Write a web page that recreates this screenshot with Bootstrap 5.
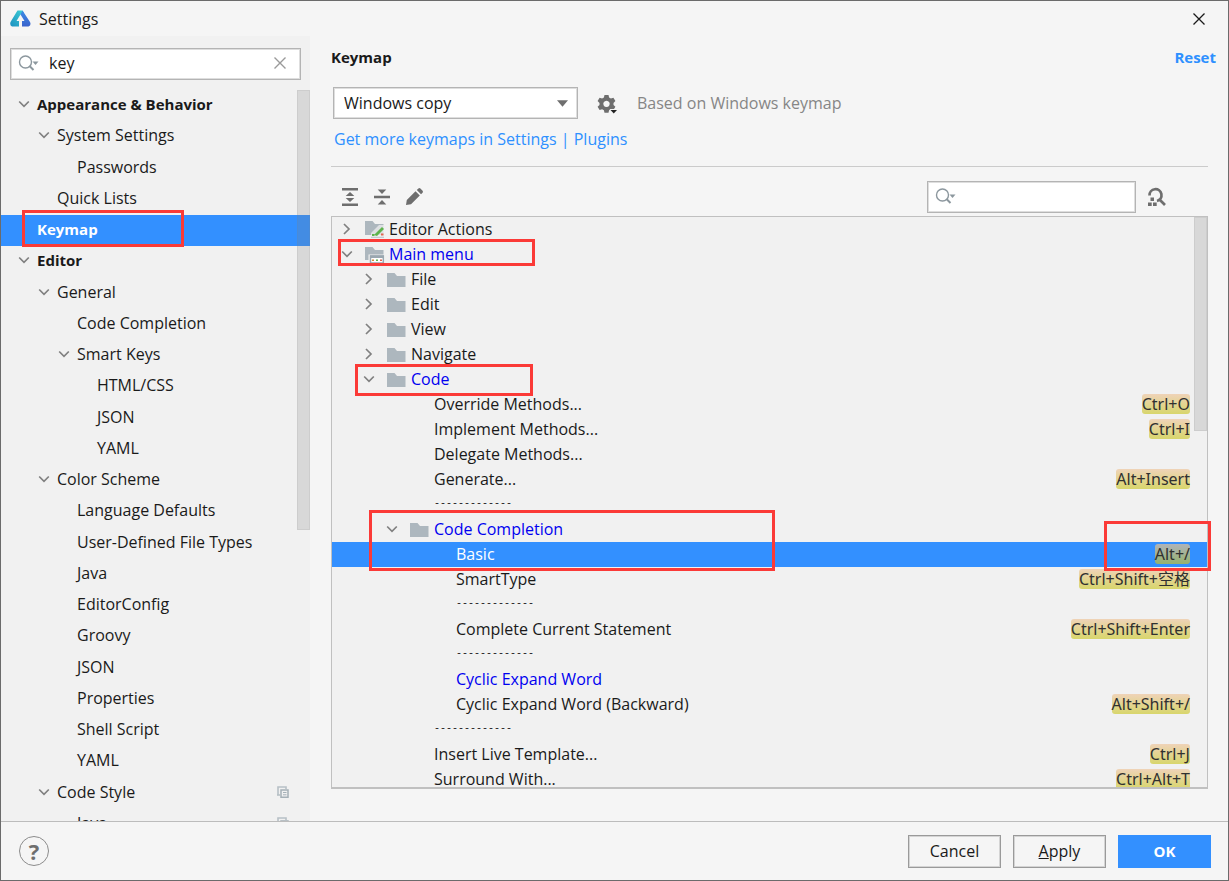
<!DOCTYPE html>
<html lang="en">
<head>
<meta charset="utf-8">
<meta name="viewport" content="width=device-width, initial-scale=1">
<title>Settings</title>
<link href="https://cdn.jsdelivr.net/npm/bootstrap@5.3.0/dist/css/bootstrap.min.css" rel="stylesheet">
<style>
  body { font-family: "Open Sans", "Noto Sans CJK SC", sans-serif; font-size: 16px; line-height: 24px; color: #1a1a1a; background: #f5f5f5; }
  .window { border: 1px solid #6b6b6b; }
  .title-bar { height: 35px; padding: 0 21px 0 9px; }
  .title-bar h1 { font-size: 16px; line-height: 24px; }
  .strong { font-size: 15px; font-weight: 700; line-height: 24px; }
  .plain-btn { border: 0; background: none; padding: 0; display: flex; color: inherit; }
  .min-h-0 { min-height: 0; }
  a { color: #2e90ff; text-decoration: none; }

  .search { height: 32px; border: 1px solid #b4b4b4; box-shadow: inset 0 0 0 1px #dedede; background: #fff; padding: 0 13px 2px 7px; }
  .search input { border: 0; outline: 0; background: none; min-width: 0; color: inherit; padding: 0; margin-left: 9px; }

  .sidebar { width: 309px; background: #f1f1f1; padding-top: 12px; }
  .sidebar .search { margin: 0 9px 10px; }
  .tree { list-style: none; margin: 0; padding: 0; }
  .nav-row { height: 31px; padding-right: 21px; padding-bottom: 4px; white-space: nowrap; }
  .nav-row:nth-child(4n+2) { height: 32px; }
  .slot { width: 23px; padding-left: 4px; display: flex; flex: none; }
  .in0 { padding-left: 13px; } .in1 { padding-left: 33px; } .in2 { padding-left: 53px; } .in3 { padding-left: 73px; }
  .chosen { background: #3390ff; color: #fff; }
  .thumb { position: absolute; top: 0; right: 0; width: 13px; background: rgba(128,128,128,.22); border: 1px solid rgba(128,128,128,.12); }
  .sidebar .thumb { height: 440px; }

  .pane { padding: 9px 20px 32px 21px; }
  .reset { margin-right: -8px; }
  .scheme-line { margin-top: 18px; }
  .scheme { width: 245px; height: 32px; border: 1px solid #b4b4b4; box-shadow: inset 0 0 0 1px #dedede; border-radius: 0; padding: 0 30px 0 10px; font-size: 16px; line-height: 24px; color: #1a1a1a; background-color: #fff; margin-left: 2px;
    background-image: url("data:image/svg+xml,%3Csvg xmlns='http://www.w3.org/2000/svg' viewBox='0 0 12 7'%3E%3Cpath fill='%236e6e6e' d='M0 0h12L6 7z'/%3E%3C/svg%3E"); background-size: 11px 7px; background-position: right 9px center; }
  .muted { color: #868686; margin-left: 19px; }
  .more { margin: 8px 0 15px 3px; }
  .rule { border-top: 1px solid #cbcbcb; }
  .toolbar { padding: 0 41px 0 9px; margin: 14px 0 3px; }
  .toolbar .search { width: 209px; }
  .by-key { margin-left: 9px; }

  .keymap { border: 1px solid #c0c0c0; border-bottom-width: 2px; background: #f1f1f1; }
  .key-row { height: 25px; padding-right: 17px; padding-bottom: 1px; white-space: nowrap; }
  .key-row .arrow { width: 26px; padding-left: 2px; display: flex; flex: none; }
  .key-row .icon { width: 24px; display: flex; flex: none; }
  .at0 { padding-left: 7px; } .at1 { padding-left: 29px; } .at2 { padding-left: 52px; }
  .leaf2 { padding-left: 102px; } .leaf3 { padding-left: 124px; }
  .dashes { font-family: "Liberation Mono", monospace; font-size: 10px; }
  .changed { color: #0000f0; }
  .keys { margin-left: auto; font-family: "Noto Sans", "Noto Sans CJK SC", sans-serif; color: #303030; line-height: 20px; height: 20px; border-radius: 3px; background: linear-gradient(#efd3b8, #d8d66c); }
  .chosen .keys { background: linear-gradient(#b0b3b8, #96b26e); }
  .keymap .thumb { height: 214px; }

  .callout-box { position: absolute; border: 3px solid #fb3a37; pointer-events: none; z-index: 2; }
  .mark-nav { left: 21px; top: -5px; width: 162px; height: 37px; }
  .mark-menu { left: 6px; top: -3px; width: 197px; height: 27px; }
  .mark-code { left: 23px; top: -3px; width: 178px; height: 32px; }
  .mark-completion { left: 37px; top: -7px; width: 406px; height: 61px; }
  .mark-keys { right: -4px; top: 304px; width: 107px; height: 50px; }

  .bottom-bar { border-top: 1px solid #bcbcbc; height: 59px; padding: 0 17px; }
  .help { width: 30px; height: 30px; border: 1px solid #8c8c8c; border-radius: 50%; background: none; color: #6e6e6e; font-size: 22px; font-weight: 700; line-height: 28px; padding: 0; margin-left: 1px; }
  .dlg-group { gap: 12px; }
  .dlg { width: 93px; height: 33px; border: 1px solid #9a9a9a; box-shadow: inset 0 0 0 1px #d4d4d4; padding: 0; line-height: 24px; color: #1a1a1a; background: #f5f5f5; }
  .dlg-ok { background: #3390ff; border-color: #3390ff; box-shadow: none; color: #fff; }
</style>
</head>
<body>
<svg class="d-none">
  <symbol id="down" viewBox="0 0 12 12"><path d="M1.200 3.500 6 8.300l4.800-4.800" fill="none" stroke="#808080" stroke-width="1.700"/></symbol>
  <symbol id="right" viewBox="0 0 12 12"><path d="M3 1 8 6l-5 5" fill="none" stroke="#808080" stroke-width="1.700"/></symbol>
  <symbol id="folder" viewBox="0 0 19 15"><path d="M0 1h7.500l2.500 3h8.500v11H0z" fill="#adb7be"/></symbol>
  <symbol id="find" viewBox="0 0 22 18"><circle cx="7.500" cy="8" r="6" fill="none" stroke="#8c979e" stroke-width="1.400"/><path d="m11.500 12 4 4" stroke="#8c979e" stroke-width="2"/><path d="M14.500 7.500h6l-3 3.500z" fill="#8c979e"/></symbol>
  <symbol id="copy" viewBox="0 0 12 12"><path d="M1 9V1h8v2" fill="none" stroke="#b7c0c6" stroke-width="1.600"/><path d="M0 9h3" stroke="#b7c0c6" stroke-width="1.600"/><path d="M4 4h7v7.200H4z" fill="#f1f1f1" stroke="#a5b0b7" stroke-width="1.500"/><path d="M6 6.500h3.500M6 8.800h3.500" stroke="#a5b0b7"/></symbol>
</svg>

<div class="window vh-100 d-flex flex-column overflow-hidden">
  <header class="title-bar d-flex align-items-center flex-shrink-0">
    <svg width="21" height="17" viewBox="0 0 21 17" aria-hidden="true">
      <defs>
        <linearGradient id="lgA" x1="0" y1="1" x2="1" y2="0"><stop offset="0" stop-color="#1c8fc0"/><stop offset="1" stop-color="#3ed0d6"/></linearGradient>
        <linearGradient id="lgB" x1="0" y1="0" x2="0" y2="1"><stop offset="0" stop-color="#3a8be6"/><stop offset="1" stop-color="#3a62cc"/></linearGradient>
      </defs>
      <path d="M7.500.5h5L14 3l-3.500 1.500L6.500 11H9v5.500H2Q-.5 15.500.5 12z" fill="url(#lgA)"/>
      <path d="M12.500.5 20 12q1.500 3.500-1.500 4.500H12V11h2.500l-4-6.500z" fill="url(#lgB)"/>
    </svg>
    <h1 class="m-0 ms-2 fw-normal">Settings</h1>
    <button class="plain-btn ms-auto" type="button" aria-label="Close"><svg width="16" height="16" viewBox="0 0 16 16"><path d="m2.500 2.500 11 11M13.500 2.500l-11 11" stroke="#1a1a1a" stroke-width="1.300"/></svg></button>
  </header>

  <div class="d-flex flex-grow-1 min-h-0">
    <aside class="sidebar d-flex flex-column flex-shrink-0">
      <div class="search d-flex align-items-center flex-shrink-0">
        <svg width="22" height="18" aria-hidden="true"><use href="#find"/></svg>
        <input class="flex-grow-1" type="text" value="key" aria-label="Search settings">
        <button class="plain-btn" type="button" aria-label="Clear"><svg width="14" height="14" viewBox="0 0 14 14"><path d="m1.500 1.500 11 11M12.500 1.500l-11 11" stroke="#9a9a9a" stroke-width="1.400"/></svg></button>
      </div>
      <div class="position-relative flex-grow-1 min-h-0 overflow-hidden">
        <ul class="tree">
          <li class="nav-row in0 d-flex align-items-center strong"><span class="slot"><svg width="12" height="12"><use href="#down"/></svg></span>Appearance &amp; Behavior</li>
          <li class="nav-row in1 d-flex align-items-center"><span class="slot"><svg width="12" height="12"><use href="#down"/></svg></span>System Settings</li>
          <li class="nav-row in2 d-flex align-items-center"><span class="slot"></span>Passwords</li>
          <li class="nav-row in1 d-flex align-items-center"><span class="slot"></span>Quick Lists</li>
          <li class="nav-row in0 d-flex align-items-center strong chosen position-relative"><span class="slot"></span>Keymap<span class="callout-box mark-nav"></span></li>
          <li class="nav-row in0 d-flex align-items-center strong"><span class="slot"><svg width="12" height="12"><use href="#down"/></svg></span>Editor</li>
          <li class="nav-row in1 d-flex align-items-center"><span class="slot"><svg width="12" height="12"><use href="#down"/></svg></span>General</li>
          <li class="nav-row in2 d-flex align-items-center"><span class="slot"></span>Code Completion</li>
          <li class="nav-row in2 d-flex align-items-center"><span class="slot"><svg width="12" height="12"><use href="#down"/></svg></span>Smart Keys</li>
          <li class="nav-row in3 d-flex align-items-center"><span class="slot"></span>HTML/CSS</li>
          <li class="nav-row in3 d-flex align-items-center"><span class="slot"></span>JSON</li>
          <li class="nav-row in3 d-flex align-items-center"><span class="slot"></span>YAML</li>
          <li class="nav-row in1 d-flex align-items-center"><span class="slot"><svg width="12" height="12"><use href="#down"/></svg></span>Color Scheme</li>
          <li class="nav-row in2 d-flex align-items-center"><span class="slot"></span>Language Defaults</li>
          <li class="nav-row in2 d-flex align-items-center"><span class="slot"></span>User-Defined File Types</li>
          <li class="nav-row in2 d-flex align-items-center"><span class="slot"></span>Java</li>
          <li class="nav-row in2 d-flex align-items-center"><span class="slot"></span>EditorConfig</li>
          <li class="nav-row in2 d-flex align-items-center"><span class="slot"></span>Groovy</li>
          <li class="nav-row in2 d-flex align-items-center"><span class="slot"></span>JSON</li>
          <li class="nav-row in2 d-flex align-items-center"><span class="slot"></span>Properties</li>
          <li class="nav-row in2 d-flex align-items-center"><span class="slot"></span>Shell Script</li>
          <li class="nav-row in2 d-flex align-items-center"><span class="slot"></span>YAML</li>
          <li class="nav-row in1 d-flex align-items-center"><span class="slot"><svg width="12" height="12"><use href="#down"/></svg></span>Code Style<svg class="ms-auto" width="12" height="12"><use href="#copy"/></svg></li>
          <li class="nav-row in2 d-flex align-items-center"><span class="slot"></span>Java<svg class="ms-auto" width="12" height="12"><use href="#copy"/></svg></li>
        </ul>
        <div class="thumb"></div>
      </div>
    </aside>

    <main class="pane d-flex flex-column flex-grow-1 min-h-0">
      <div class="d-flex justify-content-between">
        <h2 class="m-0 strong">Keymap</h2>
        <a class="strong reset" href="#">Reset</a>
      </div>
      <div class="scheme-line d-flex align-items-center">
        <select class="scheme form-select flex-shrink-0" aria-label="Keymap scheme"><option>Windows copy</option></select>
        <button class="plain-btn ms-3" type="button" aria-label="Keymap actions"><svg width="24" height="22" viewBox="0 0 24 22">
          <path fill="#6e6e6e" fill-rule="evenodd" d="M10.500 3h4l.6 2.500 1.800 1 2.500-.8 2 3.400-1.900 1.800v2l1.900 1.800-2 3.300-2.500-.7-1.800 1-.6 2.500h-4l-.6-2.500-1.800-1-2.500.7-2-3.300 1.900-1.800v-2L3.600 9.100l2-3.400 2.500.8 1.800-1zM12.500 8.700a3.200 3.200 0 1 0 .01 0z"/>
          <path d="M15.500 17h8l-4 5z" fill="#f5f5f5"/><path d="M16.500 18h6.500l-3.250 3.500z" fill="#222"/></svg></button>
        <span class="muted">Based on Windows keymap</span>
      </div>
      <div class="more"><a href="#">Get more keymaps in Settings | Plugins</a></div>
      <div class="rule"></div>
      <div class="toolbar d-flex align-items-center">
        <button class="plain-btn" type="button" aria-label="Expand all"><svg width="20" height="20" viewBox="0 0 20 20"><path d="M2 1h16v2.500H2zM2 16.500h16V19H2zM10 5l4.300 4H5.700zM10 15l4.300-4H5.700z" fill="#6e6e6e"/></svg></button>
        <button class="plain-btn ms-2 ps-1" type="button" aria-label="Collapse all"><svg width="20" height="20" viewBox="0 0 20 20"><path d="M2 8.800h16v2.400H2zM10 7 5.700 2.500h8.600zM10 13l4.300 4.500H5.700z" fill="#6e6e6e"/></svg></button>
        <button class="plain-btn ms-2 ps-1" type="button" aria-label="Edit shortcut"><svg width="20" height="20" viewBox="0 0 20 20"><path d="m2 18 .8-5L11.500 4.300l4.300 4.200L7 17.300zM12.800 3l1.600-1.500q1-.8 2 0l2.200 2.200q.8 1 0 2L17 7.300z" fill="#6e6e6e"/></svg></button>
        <div class="search d-flex align-items-center ms-auto">
          <svg class="flex-shrink-0" width="22" height="18" aria-hidden="true"><use href="#find"/></svg>
          <input class="flex-grow-1" type="text" aria-label="Search actions">
        </div>
        <button class="plain-btn by-key" type="button" aria-label="Find by shortcut"><svg width="22" height="20" viewBox="0 0 22 20"><path d="M4.500 8.500a6 6 0 1 1 7.500 5.500M14 12l6 6" fill="none" stroke="#6e6e6e" stroke-width="2.700"/><path d="M5.500 10.500H9V14H5.500zM3 15.500h3.700V19H3zM8 15.500h3.700V19H8z" fill="#6e6e6e"/></svg></button>
      </div>

      <div class="keymap position-relative flex-grow-1 min-h-0">
        <div class="h-100 overflow-hidden">
          <ul class="tree">
            <li class="key-row at0 d-flex align-items-center"><span class="arrow"><svg width="12" height="12"><use href="#right"/></svg></span><span class="icon"><svg width="20" height="18" viewBox="0 0 20 18"><path d="M0 1h7.500l2.500 3h8.500v11H0z" fill="#adb7be"/><path d="M6 17V13l8-8h5v12z" fill="#f1f1f1" opacity=".7"/><path d="m9 15 8-8 2 2-7 7z" fill="#5fb34d"/><path d="M7 14h2.500v2H7z" fill="#5fb34d"/><path d="M16 13.500h2.500v2H16z" fill="#e0654f"/><path d="M6 16.700h13V18H6z" fill="#c3cad0"/></svg></span>Editor Actions</li>
            <li class="key-row at0 d-flex align-items-center changed position-relative"><span class="arrow"><svg width="12" height="12"><use href="#down"/></svg></span><span class="icon"><svg width="20" height="18" viewBox="0 0 20 18"><path d="M0 2h7.500l2.500 3h8.500v10H0z" fill="#adb7be"/><path d="M3.500 9.500H20V18H3.500z" fill="#f1f1f1"/><path d="M5.500 11h12.800v7H5.500z" fill="#fff" stroke="#9aa7b0" stroke-width="1.500"/><path d="M5 10.500h14v2.500H5z" fill="#9aa7b0"/><path d="M7 14.500h2V16H7z" fill="#d98b35"/><path d="M11 14.500h2V16h-2z" fill="#5fb34d"/><path d="M15 14.500h2V16h-2z" fill="#e0654f"/></svg></span>Main menu<span class="callout-box mark-menu"></span></li>
            <li class="key-row at1 d-flex align-items-center"><span class="arrow"><svg width="12" height="12"><use href="#right"/></svg></span><span class="icon"><svg width="19" height="15"><use href="#folder"/></svg></span>File</li>
            <li class="key-row at1 d-flex align-items-center"><span class="arrow"><svg width="12" height="12"><use href="#right"/></svg></span><span class="icon"><svg width="19" height="15"><use href="#folder"/></svg></span>Edit</li>
            <li class="key-row at1 d-flex align-items-center"><span class="arrow"><svg width="12" height="12"><use href="#right"/></svg></span><span class="icon"><svg width="19" height="15"><use href="#folder"/></svg></span>View</li>
            <li class="key-row at1 d-flex align-items-center"><span class="arrow"><svg width="12" height="12"><use href="#right"/></svg></span><span class="icon"><svg width="19" height="15"><use href="#folder"/></svg></span>Navigate</li>
            <li class="key-row at1 d-flex align-items-center changed position-relative"><span class="arrow"><svg width="12" height="12"><use href="#down"/></svg></span><span class="icon"><svg width="19" height="15"><use href="#folder"/></svg></span>Code<span class="callout-box mark-code"></span></li>
            <li class="key-row leaf2 d-flex align-items-center">Override Methods...<span class="keys">Ctrl+O</span></li>
            <li class="key-row leaf2 d-flex align-items-center">Implement Methods...<span class="keys">Ctrl+I</span></li>
            <li class="key-row leaf2 d-flex align-items-center">Delegate Methods...</li>
            <li class="key-row leaf2 d-flex align-items-center">Generate...<span class="keys">Alt+Insert</span></li>
            <li class="key-row leaf2 d-flex align-items-center dashes">-------------</li>
            <li class="key-row at2 d-flex align-items-center changed position-relative"><span class="arrow"><svg width="12" height="12"><use href="#down"/></svg></span><span class="icon"><svg width="19" height="15"><use href="#folder"/></svg></span>Code Completion<span class="callout-box mark-completion"></span></li>
            <li class="key-row leaf3 d-flex align-items-center chosen">Basic<span class="keys">Alt+/</span></li>
            <li class="key-row leaf3 d-flex align-items-center">SmartType<span class="keys">Ctrl+Shift+空格</span></li>
            <li class="key-row leaf3 d-flex align-items-center dashes">-------------</li>
            <li class="key-row leaf3 d-flex align-items-center">Complete Current Statement<span class="keys">Ctrl+Shift+Enter</span></li>
            <li class="key-row leaf3 d-flex align-items-center dashes">-------------</li>
            <li class="key-row leaf3 d-flex align-items-center changed">Cyclic Expand Word</li>
            <li class="key-row leaf3 d-flex align-items-center">Cyclic Expand Word (Backward)<span class="keys">Alt+Shift+/</span></li>
            <li class="key-row leaf2 d-flex align-items-center dashes">-------------</li>
            <li class="key-row leaf2 d-flex align-items-center">Insert Live Template...<span class="keys">Ctrl+J</span></li>
            <li class="key-row leaf2 d-flex align-items-center">Surround With...<span class="keys">Ctrl+Alt+T</span></li>
          </ul>
        </div>
        <div class="thumb"></div>
        <span class="callout-box mark-keys"></span>
      </div>
    </main>
  </div>

  <footer class="bottom-bar d-flex align-items-center flex-shrink-0">
    <button class="help" type="button" aria-label="Help">?</button>
    <div class="dlg-group d-flex ms-auto">
      <button class="dlg" type="button">Cancel</button>
      <button class="dlg" type="button"><u>A</u>pply</button>
      <button class="dlg dlg-ok strong" type="button">OK</button>
    </div>
  </footer>
</div>
<script src="https://cdn.jsdelivr.net/npm/bootstrap@5.3.0/dist/js/bootstrap.bundle.min.js"></script>
</body>
</html>
